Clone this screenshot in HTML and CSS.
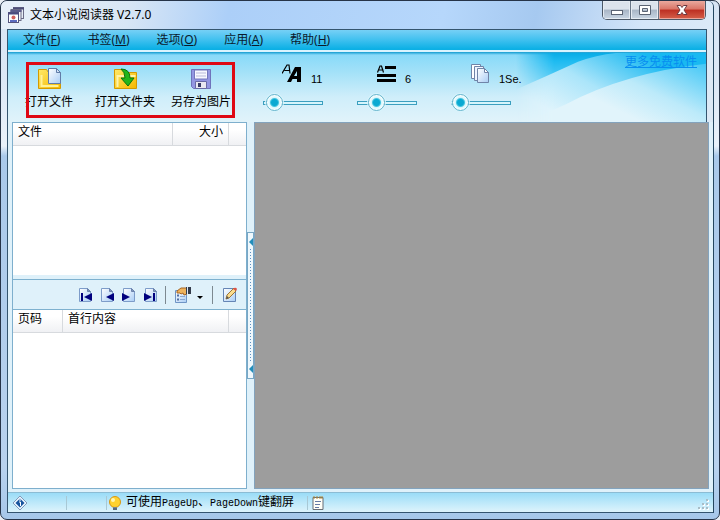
FILE: index.html
```html
<!DOCTYPE html>
<html lang="zh-CN">
<head>
<meta charset="utf-8">
<title>文本小说阅读器 V2.7.0</title>
<link rel="stylesheet" href="styles.css">
</head>
<body>
<svg class="defs" aria-hidden="true">
  <defs>
    <linearGradient id="paper" x1="0" y1="0" x2="1" y2="1"><stop offset="0" stop-color="#fff"/><stop offset="1" stop-color="#a9cdf5"/></linearGradient>
    <linearGradient id="folder" x1="0" y1="0" x2="1" y2="1"><stop offset="0" stop-color="#ffe968"/><stop offset="1" stop-color="#f5b800"/></linearGradient>
    <symbol id="page" viewBox="0 0 16 16"><path d="M2.500 1.500h8l3 3v10h-11z" fill="url(#paper)" stroke="#7d9cc9"/><path d="M10.500 1.500v3h3z" fill="#7f96bd" stroke="#6c83ad"/></symbol>
  </defs>
</svg>
<div class="window">
  <div class="frame">
    <header class="titlebar">
      <svg class="app-icon" width="16" height="16" viewBox="0 0 16 16">
        <rect x="5.500" y=".5" width="10" height="11" fill="#e7edf6" stroke="#6b6b86"/><path d="M5 1.500h11" stroke="#4d4d79" stroke-width="2"/>
        <rect x="3" y="2.500" width="10" height="11" fill="#f6f8fc" stroke="#6b6b86"/><path d="M2.500 4h11" stroke="#5c5c8c" stroke-width="2"/>
        <rect x=".5" y="5.500" width="10" height="10" fill="#fff" stroke="#54547d"/><path d="M0 6.500h11" stroke="#4b4b80" stroke-width="2"/>
        <path d="M2 13h7v2H2z" fill="#5b6bc0"/><circle cx="5.500" cy="10.500" r="2" fill="#d3605c"/>
      </svg>
      <h1>文本小说阅读器 V2.7.0</h1>
      <div class="caption">
        <button class="cap" aria-label="最小化"><svg width="14" height="12" viewBox="0 0 14 12"><rect x="1.500" y="6.500" width="11" height="4" fill="#fff" stroke="#5b6474"/></svg></button>
        <button class="cap" aria-label="最大化"><svg width="14" height="12" viewBox="0 0 14 12"><path d="M1.500 1.500h11v9h-11zM4.500 4.500v3h5v-3z" fill="#fff" fill-rule="evenodd" stroke="#5b6474"/></svg></button>
        <button class="cap close" aria-label="关闭"><svg width="14" height="12" viewBox="0 0 14 12"><path d="M2 1.500h3.500L7 3.500l1.500-2H12L9 6l3 4.500H8.500L7 8.500l-1.500 2H2L5 6z" fill="#fff" stroke="#6e3a40"/></svg></button>
      </div>
    </header>
    <main class="client">
      <div class="top">
        <nav class="menubar">
          <a href="#">文件(<u>F</u>)</a><a href="#">书签(<u>M</u>)</a><a href="#">选项(<u>O</u>)</a><a href="#">应用(<u>A</u>)</a><a href="#">帮助(<u>H</u>)</a>
        </nav>
        <div class="toolbar">
          <svg class="waves" viewBox="0 0 190 70" preserveAspectRatio="none" aria-hidden="true">
            <defs>
              <linearGradient id="w1" x1="0" y1="0" x2="0" y2="1"><stop offset="0" stop-color="#08ace6"/><stop offset=".12" stop-color="#1ebbf1"/><stop offset=".5" stop-color="#6fd3f7"/><stop offset="1" stop-color="#c8eefb"/></linearGradient>
              <linearGradient id="w2" gradientUnits="userSpaceOnUse" x1="40" y1="62" x2="88" y2="-22"><stop offset="0" stop-color="#e0f4fc"/><stop offset=".45" stop-color="#abe5fa"/><stop offset="1" stop-color="#19b9f1"/></linearGradient>
              <linearGradient id="w3" gradientUnits="userSpaceOnUse" x1="130" y1="72" x2="165" y2="0"><stop offset="0" stop-color="#e1f4fb"/><stop offset=".4" stop-color="#bceafa"/><stop offset="1" stop-color="#45c8f6"/></linearGradient>
              <linearGradient id="fade"><stop offset="0" stop-color="#fff" stop-opacity="0"/><stop offset=".2" stop-color="#fff"/></linearGradient>
              <mask id="m"><path d="M0 0h190v70H0z" fill="url(#fade)"/></mask>
            </defs>
            <g mask="url(#m)">
              <path d="M0 0H190V70H0z" fill="url(#w1)"/>
              <path d="M0 37Q30 24 62 9Q80 2 100 0H190V70H0z" fill="url(#w2)"/>
              <path d="M50 52Q110 20 190 11V70H10z" fill="url(#w3)"/>
            </g>
          </svg>
          <div class="actions">
            <button class="action"><svg width="24" height="24" viewBox="0 0 24 24"><path d="M1.500 2.500h8l2 3h12v16h-22z" fill="url(#folder)" stroke="#d49a00"/><path d="M4.500 8v11h17" fill="none" stroke="#fff29a" stroke-width="2"/><path d="M11.500 1.500h8l4 4v11h-12z" fill="url(#paper)" stroke="#617ca8"/><path d="M19.500 1.500v4h4z" fill="#cfe0f6" stroke="#617ca8"/></svg>打开文件</button>
            <button class="action"><svg width="24" height="24" viewBox="0 0 24 24"><path d="M1.500 2.500h8l2 3h12v16h-22z" fill="url(#folder)" stroke="#d49a00"/><path d="M4.500 20V9h18" fill="none" stroke="#fff3a8" stroke-width="2"/><path d="M8 2q9 0 9 9h4l-6 8-7-8h4q0-6-4-9z" fill="#22b51a" stroke="#08750c"/></svg>打开文件夹</button>
            <button class="action"><svg width="24" height="24" viewBox="0 0 24 24"><path d="M2.500 2.500h19v19H4.500l-2-2z" fill="#9397e2" stroke="#6f73bb"/><path d="M5.500 3h13v9h-13z" fill="#f7f8ff" stroke="#7478bd"/><path d="M7 6h10M7 9h10" stroke="#b9bbd9"/><path d="M6.500 14.500h11v7h-11z" fill="#e9e9f1" stroke="#686ba5"/><path d="M9 16h3v4H9z" fill="#383b68"/></svg>另存为图片</button>
            <div class="highlight"></div>
          </div>
          <div class="adjust">
            <div class="setting"><div class="readout"><svg width="20" height="20" viewBox="0 0 20 20"><path d="M0 9.500L5 1h2l1 8.500M2.500 6.500h5" fill="none" stroke="#000" stroke-width="1.200"/><path d="M5 18L13 3h6v15h-4v-3h-4.500L9 18zM12 12h3V7z" fill-rule="evenodd"/></svg><output for="size">11</output></div><input id="size" type="range" min="0" max="100" value="5" aria-label="字号"></div>
            <div class="setting"><div class="readout"><svg width="20" height="20" viewBox="0 0 20 20"><path d="M1.500 8.500L4 2h1.500l2 6.500M2.500 6h5" fill="none" stroke="#000" stroke-width="1.200"/><path d="M9 2h11v3H9zM1 10h19v3H1zM1 15h19v3H1z"/></svg><output for="line">6</output></div><input id="line" type="range" min="0" max="100" value="24" aria-label="行距"></div>
            <div class="setting"><div class="readout"><svg width="20" height="20" viewBox="0 0 20 20" stroke="#7084a8"><path d="M1.500.5h9v14h-9z" fill="#fff"/><path d="M4.500 2.500h9v14h-9z" fill="#eff5ff"/><path d="M7.500 4.500h7l4 4v10h-11z" fill="url(#paper)"/><path d="M14.500 4.500v4h4z" fill="#fff"/></svg><output for="speed">1Se.</output></div><input id="speed" type="range" min="0" max="100" value="0" aria-label="翻页间隔"></div>
          </div>
          <a class="more" href="#">更多免费软件</a>
        </div>
      </div>
      <div class="workspace">
        <aside class="sidebar">
          <section class="list files"><table><thead><tr><th class="name">文件</th><th class="size">大小</th><th class="rest"></th></tr></thead></table></section>
          <div class="pager">
            <button aria-label="第一页"><svg width="16" height="16"><use href="#page"/><path d="M4 6h2v8H4zM15 6v8l-8-4z" fill="#00007e"/></svg></button>
            <button aria-label="上一页"><svg width="16" height="16"><use href="#page"/><path d="M15 6v8l-8-4z" fill="#00007e"/></svg></button>
            <button aria-label="下一页"><svg width="16" height="16"><use href="#page"/><path d="M1 6v8l8-4z" fill="#00007e"/></svg></button>
            <button aria-label="最后一页"><svg width="16" height="16"><use href="#page"/><path d="M1 6v8l8-4zM10 6h2v8h-2z" fill="#00007e"/></svg></button>
            <i class="divider"></i>
            <button class="props" aria-label="属性"><svg width="28" height="18" viewBox="0 0 28 18"><path d="M.5 4.500h11v12H.5z" fill="url(#paper)" stroke="#6f95c5"/><path d="M2 9.500h2M2 13.500h2" stroke="#526fa1" stroke-width="2"/><path d="M5 10.500h5M5 13.500h5" stroke="#8ba9d0"/><path d="M2 5l4-3h6v6l-3 1-1-2-2 1-1-1H2z" fill="#eeb35d" stroke="#a66624"/><path d="M11 1h5v7h-5z" fill="#343c4b"/><path d="M12 1h1v7h-1z" fill="#dce7f3"/><path d="M22 10h6l-3 3z" fill="#000"/></svg></button>
            <i class="divider"></i>
            <button aria-label="编辑"><svg width="16" height="16"><path d="M1.500 1.500h12v13h-12z" fill="url(#paper)" stroke="#6585b5"/><path d="M4 12l1-4 7-7 2 3-7 7z" fill="#fbdc8d" stroke="#9c7636"/><path d="M11 2l1-1q2-1 3 1l-1 2z" fill="#dc5147"/><path d="M4 12l1-3 2 2z" fill="#555"/></svg></button>
          </div>
          <section class="list pages"><table><thead><tr><th class="num">页码</th><th>首行内容</th><th class="rest"></th></tr></thead></table></section>
        </aside>
        <div class="splitter"><button class="handle" aria-label="折叠侧栏"><i class="arrow"></i><i class="dots"></i><i class="arrow"></i></button></div>
        <section class="reader"></section>
      </div>
      <footer class="status">
        <span class="cell info"><svg width="16" height="16" viewBox="0 0 16 16"><path d="M8 1l7 7-7 7-7-7z" fill="#e9f5ff" stroke="#8098b8"/><path d="M8 3.500L12.500 8 8 12.500 3.500 8z" fill="#17539e"/><path d="M7 5h2M7 7h1.500v4" stroke="#fff" fill="none"/></svg></span>
        <span class="cell blank"></span>
        <span class="cell tip"><svg width="14" height="16" viewBox="0 0 14 16"><circle cx="7" cy="7" r="5.500" fill="#ffd22f" stroke="#d99812"/><circle cx="5" cy="5" r="2" fill="#fff7b4"/><path d="M5 12h4v3H5z" fill="#788493"/><path d="M5 14h4" stroke="#3d4f61"/></svg><span>可使用<span class="latin">PageUp</span>、<span class="latin">PageDown</span>键翻屏</span></span>
        <span class="cell note"><svg width="12" height="16" viewBox="0 0 12 16"><path d="M1 2.500h10v12H1z" fill="#fffef7" stroke="#676d75"/><path d="M2 1v3M5 1v3M8 1v3M10 1v3" stroke="#b48a37"/><path d="M3 6.500h6M3 9.500h5M3 12.500h4" stroke="#657aa5"/></svg></span>
        <svg class="grip" width="12" height="12" viewBox="0 0 12 12"><path d="M9 1h2v2H9zM5 5h2v2H5zM9 5h2v2H9zM1 9h2v2H1zM5 9h2v2H5zM9 9h2v2H9z" fill="#fff"/><path d="M8 0h2v2H8zM4 4h2v2H4zM8 4h2v2H8zM0 8h2v2H0zM4 8h2v2H4zM8 8h2v2H8z" fill="#a8bdc7"/></svg>
      </footer>
    </main>
  </div>
</div>
</body>
</html>
```
FILE: styles.css
```css
* { box-sizing: border-box; }
body { margin: 0; background: #e9eef4; font: 12px/16px "Liberation Sans", "Noto Sans CJK SC", sans-serif; color: #000; }
button { margin: 0; padding: 0; border: 0; background: none; font: inherit; color: inherit; }
svg { display: block; flex: none; }
.defs { position: absolute; width: 0; height: 0; }

.window {
  min-height: 100vh; display: flex; padding: 0 5px 6px 0;
  border: 1px solid #263448; border-radius: 7px; overflow: hidden;
  background: linear-gradient(#d7e5f4 0, #dce8f6 80px, #eaf2fa 145px, #a9c9ea 155px, #b8d2ee 90%, #a6c7e9 100%);
}
.frame { flex: 1; min-width: 0; display: flex; flex-direction: column; border-right: 1px solid #244760; border-radius: 0 6px 0 0; }
.titlebar {
  height: 28px; display: flex; align-items: flex-start; padding: 0 7px 0 7px; border-radius: 6px 6px 0 0;
  background: linear-gradient(100deg, #e8f0f9 0, #d8e6f5 18%, #accff8 32%, #b6d7fb 62%, #a6c9f0 75%, #d4e5f8 90%, #dceaf8 100%);
}
.app-icon { margin-top: 6px; }
h1 { flex: 1; margin: 5px 0 0 6px; font: 12px/18px "Noto Sans", "Noto Sans CJK SC", sans-serif; }
.caption { display: flex; height: 19px; border: 1px solid #4c5867; border-top: 0; border-radius: 0 0 5px 5px; overflow: hidden; }
.cap { width: 28px; display: grid; place-items: center; border-right: 1px solid #697687; background: linear-gradient(#dce3ec 0 45%, #a9b6c6 50%, #c9d6e4); box-shadow: inset 0 0 0 1px #e5ebf2; }
.cap.close { width: 46px; border: 0; background: linear-gradient(#e9a99e 0, #da7567 45%, #bd2f22 50%, #d5604a); box-shadow: inset 0 0 0 1px #eba59b; }

.client { flex: 1; display: flex; flex-direction: column; margin-left: 6px; border: solid #34556f; border-width: 0 0 1px 1px; background: #dff1fa; }
.top { display: flex; flex-direction: column; margin-right: 6px; border: solid #34556f; border-width: 1px 1px 0 0; box-shadow: 6px 0 #dce9f5; }
.menubar { height: 22px; display: flex; align-items: center; gap: 27px; padding: 0 15px; background: linear-gradient(#76d0f6, #3fc0ef 50%, #0cb0e5 95%); border-bottom: 2px solid #d9f4ff; font-family: "Noto Sans", "Noto Sans CJK SC", sans-serif; }
.menubar a { color: #0b1a2c; text-decoration: none; }
.toolbar { position: relative; height: 70px; display: flex; background: linear-gradient(#129bd0 0, #88daf9 3px, #a3e1f8 20px, #cfeefa 45px, #e1f3fa); }
.waves { position: absolute; right: 0; top: 1px; width: 190px; height: 69px; }
.actions { position: relative; display: flex; padding-left: 3px; }
.action { width: 76px; display: flex; flex-direction: column; align-items: center; justify-content: flex-start; gap: 3px; padding-top: 15px; }
.highlight { position: absolute; left: 18px; top: 10px; width: 209px; height: 56px; border: 3px solid #df0814; }
.adjust { position: relative; display: flex; padding: 12px 0 0 24px; }
.setting { width: 94px; }
.readout { height: 24px; display: flex; align-items: flex-start; gap: 9px; padding-left: 19px; }
.readout output { font-size: 11px; line-height: 14px; margin-top: 8px; }
input[type=range] { display: block; width: 60px; height: 18px; margin: 6px 0 0; appearance: none; background: none; }
input[type=range]::-webkit-slider-runnable-track { height: 4px; border: 1px solid #3b9fbf; background: #d5f5fc; }
input[type=range]::-webkit-slider-thumb { appearance: none; width: 17px; height: 17px; margin-top: -8px; border: 1px solid #67b5cd; border-radius: 50%; background: radial-gradient(circle, #0aa9d2 0 3px, #44c4df 4px, #d5f5fc 5px, #f6feff 7px); box-shadow: 0 0 0 1px #d8f4fc; }
.more { position: absolute; right: 9px; top: 2px; color: #078ef0; }

.workspace { flex: 1; display: flex; padding: 0 4px 3px 4px; background: #dff1fa; }
.sidebar { width: 235px; display: flex; flex-direction: column; border: 1px solid #7eafcd; background: #dff1fa; }
.list { background: #fff; }
.files { flex: 152 0 0; }
.pages { flex: 179 0 0; }
table { width: 100%; border-collapse: separate; border-spacing: 0; table-layout: fixed; }
th { height: 23px; padding: 0 5px 4px; text-align: left; font-weight: 400; line-height: 16px; background: linear-gradient(#fff 30%, #f0f1f4); border: solid #d7dade; border-width: 0 1px 1px 0; white-space: nowrap; }
th.size { width: 56px; text-align: right; }
th.num { width: 50px; }
th.rest { width: 17px; padding: 0; border-right: 0; }
.pager { height: 31px; margin-top: 4px; display: flex; align-items: center; justify-content: flex-end; gap: 6px; padding: 2px 8px 0 0; border: solid #7eb1cf; border-width: 1px 0; }
.props { margin-right: 3px; }
.divider { width: 1px; height: 18px; margin-right: 3px; background: #7d8990; }
.splitter { width: 7px; display: flex; align-items: center; }
.handle { width: 7px; height: 147px; display: flex; flex-direction: column; align-items: center; padding: 5px 0; border: 1px solid #78a7c5; background: #eff8fd; }
.arrow { border: 4px solid transparent; border-left: 0; border-right-color: #228ebb; }
.dots { flex: 1; width: 1px; margin: 3px 0; background: repeating-linear-gradient(#5b8fc4 0 1px, transparent 1px 3px); }
.reader { flex: 1; border: 1px solid #83a3bd; background: #9d9d9d; }

.status { height: 20px; display: flex; align-items: center; border-top: 1px solid #8bbcd4; background: linear-gradient(#9adcf7, #caedfb 70%, #def3fb); font: 12px/18px "Noto Sans CJK SC", sans-serif; }
.cell { height: 14px; display: flex; align-items: center; border-right: 1px solid #a8c8d5; }
.info { width: 59px; padding-left: 4px; }
.blank { width: 40px; }
.tip { width: 201px; gap: 4px; padding-left: 1px; white-space: nowrap; }
.note { flex: 1; padding-left: 4px; border: 0; }
.latin { font-family: "Liberation Mono", monospace; font-size: 10px; }
.grip { margin: 4px 3px 0 0; }
```
